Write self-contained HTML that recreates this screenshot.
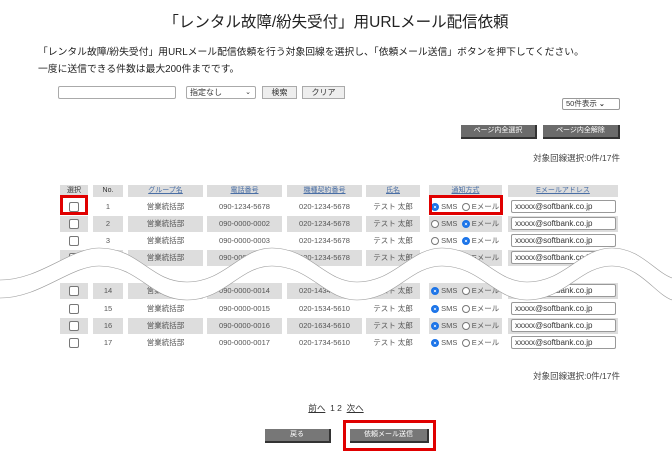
<!DOCTYPE html>
<html><head><meta charset="utf-8">
<style>
body{margin:0;width:672px;height:455px;background:#fff;position:relative;overflow:hidden;font-family:"Liberation Sans","Noto Sans CJK JP",sans-serif;color:#333}
.a{position:absolute}
.c{position:absolute;height:16px;line-height:16px;text-align:center;font-size:7.5px;color:#555}
.g .c{background:#ddd}
.h{position:absolute;top:185px;height:12px;line-height:12px;background:#ddd;text-align:center;font-size:7px;color:#4a6fa5;text-decoration:underline}
.c1{left:60px;width:28px}.c2{left:93px;width:30px}.c3{left:128px;width:75px}.c4{left:207px;width:75px}.c5{left:287px;width:75px}.c6{left:366px;width:54px}.c7{left:429px;width:73px;text-align:left}.c8{left:508px;width:110px}
.cb{display:inline-block;width:8px;height:8px;border:1px solid #777;border-radius:2px;background:#fff;vertical-align:middle}
.r{display:inline-block;width:8px;height:8px;border:1px solid #777;border-radius:50%;background:#fff;vertical-align:middle;box-sizing:border-box}
.r.on{border:2.5px solid #1a73e8;background:#fff;box-shadow:inset 0 0 0 1px #1a73e8}
.em{position:absolute;left:3px;top:1px;height:13px;border:1px solid #999;background:#fff;font-size:8px;line-height:12px;text-align:left;padding-left:3px;color:#333;border-radius:2px;box-sizing:border-box;width:105px}
.btn{position:absolute;height:12px;line-height:12px;background:#6b6b6b;color:#fff;font-size:7px;text-align:center;border-right:2px solid #333;border-bottom:2px solid #333}
.red{position:absolute;border:3px solid #e00000;box-sizing:border-box}
</style></head><body>
<div class="a" style="left:0;width:672px;top:10px;text-align:center;font-size:15.5px;color:#222">「レンタル故障/紛失受付」用URLメール配信依頼</div>
<div class="a" style="left:38px;top:44px;font-size:9.8px;line-height:17px;color:#222;white-space:nowrap">「レンタル故障/紛失受付」用URLメール配信依頼を行う対象回線を選択し、「依頼メール送信」ボタンを押下してください。<br>一度に送信できる件数は最大200件までです。</div>

<div class="a" style="left:58px;top:86px;width:118px;height:13px;border:1px solid #aaa;border-radius:2px;box-sizing:border-box"></div>
<div class="a" style="left:186px;top:86px;width:70px;height:13px;border:1px solid #aaa;border-radius:2px;box-sizing:border-box;font-size:8px;line-height:11px;padding-left:3px;color:#333">指定なし<span style="position:absolute;right:4px;font-size:7px">&#8964;</span></div>
<div class="a" style="left:262px;top:86px;width:35px;height:13px;border:1px solid #aaa;background:#eee;box-sizing:border-box;font-size:8px;line-height:11px;text-align:center">検索</div>
<div class="a" style="left:302px;top:86px;width:43px;height:13px;border:1px solid #aaa;background:#eee;box-sizing:border-box;font-size:8px;line-height:11px;text-align:center">クリア</div>
<div class="a" style="left:562px;top:98px;width:58px;height:12px;border:1px solid #999;border-radius:2px;box-sizing:border-box;font-size:7.5px;line-height:10px;padding-left:3px">50件表示 <b style="font-size:7px">&#8964;</b></div>

<div class="btn" style="left:461px;top:125px;width:74px">ページ内全選択</div>
<div class="btn" style="left:543px;top:125px;width:75px">ページ内全解除</div>
<div class="a" style="right:52px;top:152px;font-size:8.5px;color:#444">対象回線選択:0件/17件</div>

<div class="h c1" style="color:#333;text-decoration:none">選択</div>
<div class="h c2" style="color:#333;text-decoration:none">No.</div>
<div class="h c3">グループ名</div>
<div class="h c4">電話番号</div>
<div class="h c5">機種契約番号</div>
<div class="h c6">氏名</div>
<div class="h c7" style="text-align:center">通知方式</div>
<div class="h c8">Eメールアドレス</div>

<div style="position:absolute;top:199px;left:0;width:672px">
<div class="c c1"><span class="cb"></span></div><div class="c c2">1</div><div class="c c3">営業統括部</div><div class="c c4">090-1234-5678</div><div class="c c5">020-1234-5678</div><div class="c c6">テスト 太郎</div><div class="c c7">&nbsp;<span class="r on"></span> SMS &nbsp;<span class="r"></span> Eメール</div><div class="c c8"><div class="em">xxxxx@softbank.co.jp</div></div></div>
<div class="g" style="position:absolute;top:216px;left:0;width:672px">
<div class="c c1"><span class="cb"></span></div><div class="c c2">2</div><div class="c c3">営業統括部</div><div class="c c4">090-0000-0002</div><div class="c c5">020-1234-5678</div><div class="c c6">テスト 太郎</div><div class="c c7">&nbsp;<span class="r"></span> SMS &nbsp;<span class="r on"></span> Eメール</div><div class="c c8"><div class="em">xxxxx@softbank.co.jp</div></div></div>
<div style="position:absolute;top:233px;left:0;width:672px">
<div class="c c1"><span class="cb"></span></div><div class="c c2">3</div><div class="c c3">営業統括部</div><div class="c c4">090-0000-0003</div><div class="c c5">020-1234-5678</div><div class="c c6">テスト 太郎</div><div class="c c7">&nbsp;<span class="r"></span> SMS &nbsp;<span class="r on"></span> Eメール</div><div class="c c8"><div class="em">xxxxx@softbank.co.jp</div></div></div>
<div class="g" style="position:absolute;top:250px;left:0;width:672px">
<div class="c c1"><span class="cb"></span></div><div class="c c2">4</div><div class="c c3">営業統括部</div><div class="c c4">090-0000-0004</div><div class="c c5">020-1234-5678</div><div class="c c6">テスト 太郎</div><div class="c c7">&nbsp;<span class="r"></span> SMS &nbsp;<span class="r on"></span> Eメール</div><div class="c c8"><div class="em">xxxxx@softbank.co.jp</div></div></div>
<div class="g" style="position:absolute;top:283px;left:0;width:672px">
<div class="c c1"><span class="cb"></span></div><div class="c c2">14</div><div class="c c3">営業統括部</div><div class="c c4">090-0000-0014</div><div class="c c5">020-1434-5610</div><div class="c c6">テスト 太郎</div><div class="c c7">&nbsp;<span class="r on"></span> SMS &nbsp;<span class="r"></span> Eメール</div><div class="c c8"><div class="em">xxxxx@softbank.co.jp</div></div></div>
<div style="position:absolute;top:301px;left:0;width:672px">
<div class="c c1"><span class="cb"></span></div><div class="c c2">15</div><div class="c c3">営業統括部</div><div class="c c4">090-0000-0015</div><div class="c c5">020-1534-5610</div><div class="c c6">テスト 太郎</div><div class="c c7">&nbsp;<span class="r on"></span> SMS &nbsp;<span class="r"></span> Eメール</div><div class="c c8"><div class="em">xxxxx@softbank.co.jp</div></div></div>
<div class="g" style="position:absolute;top:318px;left:0;width:672px">
<div class="c c1"><span class="cb"></span></div><div class="c c2">16</div><div class="c c3">営業統括部</div><div class="c c4">090-0000-0016</div><div class="c c5">020-1634-5610</div><div class="c c6">テスト 太郎</div><div class="c c7">&nbsp;<span class="r on"></span> SMS &nbsp;<span class="r"></span> Eメール</div><div class="c c8"><div class="em">xxxxx@softbank.co.jp</div></div></div>
<div style="position:absolute;top:335px;left:0;width:672px">
<div class="c c1"><span class="cb"></span></div><div class="c c2">17</div><div class="c c3">営業統括部</div><div class="c c4">090-0000-0017</div><div class="c c5">020-1734-5610</div><div class="c c6">テスト 太郎</div><div class="c c7">&nbsp;<span class="r on"></span> SMS &nbsp;<span class="r"></span> Eメール</div><div class="c c8"><div class="em">xxxxx@softbank.co.jp</div></div></div>

<svg class="a" style="left:0;top:0" width="672" height="455" viewBox="0 0 672 455">
<path d="M0,280 C40,280 70,248 99,248 C140,248 150,282 187,282 C225,282 240,248 272,248 C310,248 325,282 357,282 C395,282 410,248 442,248 C480,248 495,282 527,282 C565,282 580,248 612,248 C640,248 655,272 672,278 L672,300 C655,294 640,266 612,266 C580,266 565,300 527,300 C495,300 480,266 442,266 C410,266 395,300 357,300 C325,300 310,266 272,266 C240,266 225,300 187,300 C150,300 140,266 99,266 C70,266 40,298 0,298 Z" fill="#fff" stroke="none"/>
<path d="M0,280 C40,280 70,248 99,248 C140,248 150,282 187,282 C225,282 240,248 272,248 C310,248 325,282 357,282 C395,282 410,248 442,248 C480,248 495,282 527,282 C565,282 580,248 612,248 C640,248 655,272 672,278" fill="none" stroke="#999" stroke-width="0.6"/>
<path d="M0,298 C40,298 70,266 99,266 C140,266 150,300 187,300 C225,300 240,266 272,266 C310,266 325,300 357,300 C395,300 410,266 442,266 C480,266 495,300 527,300 C565,300 580,266 612,266 C640,266 655,294 672,300" fill="none" stroke="#999" stroke-width="0.6"/>
</svg>

<div class="a" style="right:52px;top:370px;font-size:8.5px;color:#444">対象回線選択:0件/17件</div>
<div class="a" style="left:0;width:672px;top:402px;text-align:center;font-size:8.5px;color:#333"><u>前へ</u>&nbsp; 1 2 &nbsp;<u>次へ</u></div>
<div class="btn" style="left:265px;top:429px;width:64px;background:#777">戻る</div>
<div class="btn" style="left:350px;top:429px;width:77px;background:#777">依頼メール送信</div>

<div class="red" style="left:60px;top:195px;width:28px;height:20px"></div>
<div class="red" style="left:429px;top:195px;width:74px;height:20px"></div>
<div class="red" style="left:343px;top:420px;width:93px;height:31px"></div>
</body></html>
